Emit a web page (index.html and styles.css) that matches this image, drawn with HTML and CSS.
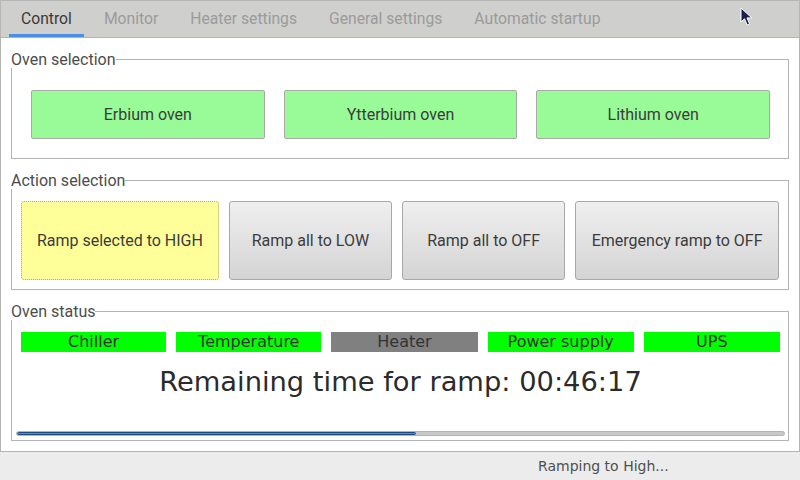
FILE: index.html
```html
<!DOCTYPE html>
<html>
<head>
<meta charset="utf-8">
<link rel="stylesheet" href="styles.css">
</head>
<body>
<div class="window">
  <div class="tabbar">
    <div class="tab active">Control</div>
    <div class="tab">Monitor</div>
    <div class="tab">Heater settings</div>
    <div class="tab">General settings</div>
    <div class="tab">Automatic startup</div>
  </div>
  <div class="content">
    <div class="group">
      <div class="group-title"><span>Oven selection</span></div>
      <div class="group-body ovens">
        <button class="btn green">Erbium oven</button>
        <button class="btn green">Ytterbium oven</button>
        <button class="btn green">Lithium oven</button>
      </div>
    </div>
    <div class="group">
      <div class="group-title"><span>Action selection</span></div>
      <div class="group-body actions">
        <button class="btn yellow a1">Ramp selected to HIGH</button>
        <button class="btn gray a2">Ramp all to LOW</button>
        <button class="btn gray a3">Ramp all to OFF</button>
        <button class="btn gray a4">Emergency ramp to OFF</button>
      </div>
    </div>
    <div class="group grow">
      <div class="group-title"><span>Oven status</span></div>
      <div class="group-body status">
        <div class="labels">
          <div class="lbl on s1">Chiller</div>
          <div class="lbl on s2">Temperature</div>
          <div class="lbl off s3">Heater</div>
          <div class="lbl on s4">Power supply</div>
          <div class="lbl on s5">UPS</div>
        </div>
        <div class="remaining">Remaining time for ramp: 00:46:17</div>
        <div class="progress"><div class="fill" style="width:52%"></div></div>
      </div>
    </div>
  </div>
  <div class="statusbar">Ramping to High...</div>
  <svg class="cursor" width="14" height="20" viewBox="0 0 14 20">
    <path d="M1 1 L1 15 L4.5 11.8 L7.2 18 L9.6 17 L7 10.9 L11.8 10.9 Z" fill="#1c1f4a" stroke="#ffffff" stroke-width="1" stroke-linejoin="round"/>
  </svg>
</div>
</body>
</html>
```
FILE: styles.css
```css
* { box-sizing: border-box; }
html, body { margin: 0; padding: 0; }
body {
  background: #ececec;
  font-family: Roboto, "Liberation Sans", sans-serif;
  width: 800px;
  height: 480px;
  overflow: hidden;
}
.window {
  position: relative;
  width: 800px;
  height: 480px;
  display: flex;
  flex-direction: column;
}
.tabbar {
  height: 37px;
  background: #cfcfcd;
  border-top: 1px solid #b6b6b4;
  border-left: 1px solid #b6b6b4;
  border-right: 1px solid #b6b6b4;
  display: flex;
  padding-left: 8px;
  gap: 8px;
}
.tab {
  height: 36px;
  padding: 3px 12px 0 12px;
  font-size: 15.7px;
  color: #9b9b9b;
  border-bottom: 3px solid transparent;
  line-height: 30px;
  white-space: nowrap;
}
.tab.active {
  color: #3a3a3a;
  border-bottom-color: #4a8fe3;
}
.content {
  height: 415px;
  background: #ffffff;
  border: 1px solid #b4b4b2;
  padding: 0 10px 10px 10px;
  display: flex;
  flex-direction: column;
}
.group {
  margin-top: 14px;
  display: flex;
  flex-direction: column;
}
.group.grow { flex: 1; }
.group-title {
  height: 16px;
  display: flex;
  font-size: 16px;
  color: #4d4d4d;
}
.group-title span {
  line-height: 15px;
  white-space: nowrap;
}
.group-title::after {
  content: "";
  flex: 1;
  margin-top: 7px;
  border-top: 1px solid #b4b4b4;
  border-right: 1px solid #b4b4b4;
}
.group-body {
  border: 1px solid #b4b4b4;
  border-top: none;
  display: flex;
}
.btn {
  font-family: Roboto, "Liberation Sans", sans-serif;
  font-size: 16px;
  color: #3c3c3c;
  padding: 0;
  margin: 0;
}
.ovens {
  padding: 22px 18px 19px 19px;
  gap: 19px;
}
.btn.green {
  flex: 1;
  height: 49px;
  background: #98fb98;
  border: 1px solid #a9a9a9;
  border-radius: 2px;
}
.actions {
  padding: 12px 9px 9px 9px;
  gap: 10px;
}
.actions .btn {
  height: 79px;
  border-radius: 3px;
}
.a1 { flex: 198 1 0; }
.a2 { flex: 163 1 0; }
.a3 { flex: 163 1 0; }
.a4 { flex: 204 1 0; }
.btn.gray {
  background: linear-gradient(#efefef, #d4d4d4);
  border: 1px solid #a8a8a8;
}
.btn.yellow {
  background: #ffff99;
  border: 1px dotted #a8a86a;
}
.status {
  flex: 1;
  flex-direction: column;
  padding: 12px 3px 4px 4px;
}
.labels {
  display: flex;
  gap: 10px;
  margin: 0 5px 0 5px;
}
.lbl {
  height: 20px;
  line-height: 20px;
  text-align: center;
  font-family: "DejaVu Sans", sans-serif;
  font-size: 16px;
  color: #333333;
  white-space: nowrap;
}
.s1, .s2 { flex: 146 1 0; }
.s3, .s4 { flex: 147 1 0; }
.s5 { flex: 137 1 0; }
.lbl.on { background: #00ff00; }
.lbl.off { background: #808080; }
.remaining {
  margin-top: 13px;
  text-align: center;
  font-family: "DejaVu Sans", sans-serif;
  font-size: 27.3px;
  line-height: 34px;
  color: #2b2b2b;
  flex: 1;
}
.progress {
  height: 5px;
  background: #c8c8c8;
  border: 1px solid #b4b4b4;
  border-radius: 3px;
  overflow: hidden;
}
.fill {
  height: 100%;
  background: #4a8fe0;
  border: 1px solid #1d4a80;
  border-radius: 2px;
}
.statusbar {
  flex: 1;
  padding-left: 538px;
  font-family: "DejaVu Sans", sans-serif;
  font-size: 14px;
  line-height: 28px;
  color: #505050;
  white-space: nowrap;
}
.cursor {
  position: absolute;
  left: 740px;
  top: 7px;
}
```
